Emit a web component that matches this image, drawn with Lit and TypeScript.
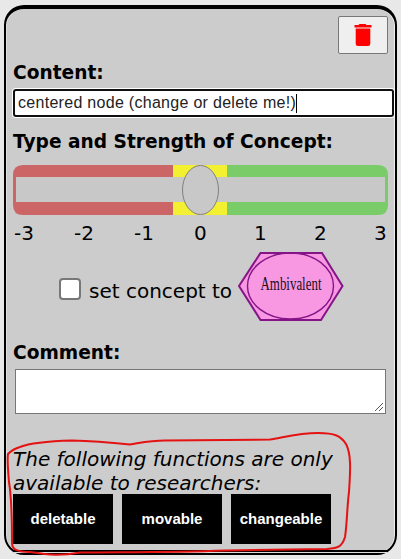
import { LitElement, html, css } from "lit";
import { customElement } from "lit/decorators.js";

@customElement("app-root")
export class AppRoot extends LitElement {
  static styles = css`
    :host { display: block; position: relative; width: 401px; height: 559px; overflow: hidden;
      background: #e8e8e8; font-family: "DejaVu Sans", Verdana, sans-serif; font-size: 20px; color: #000; }
    * { box-sizing: border-box; }
    .page { height: 559px; padding: 5px 4px 4px; }
    .card { height: 550px; border: 2px solid #000; border-top-width: 4px; border-radius: 20px;
      background: #ccc; padding: 7px 0 0 7px; display: flex; flex-direction: column; align-items: flex-start;
      box-shadow: inset -1px 0 #eee, inset 1px 0 #ddd; position: relative; }
    .foot { position: absolute; left: 8px; right: 8px; bottom: 0; height: 3px; background: #000; border-bottom: 1px solid #ddd; }
    .trash { margin-left: 325px; width: 50px; height: 38px; border: 1px solid #777; border-radius: 2px;
      background: #efefef; display: flex; align-items: center; justify-content: center; padding: 0; }
    .label { font-size: 18.6px; font-weight: 700; line-height: 24px; height: 24px; white-space: nowrap; }
    .content { margin-top: 7px; }
    .field { width: 381px; height: 28px; margin-top: 4px; border: 2px solid #101010; border-radius: 3px;
      box-shadow: 0 0 0 1px #fff; background: #fff; font: 16px/24px "Liberation Sans", Arial, sans-serif;
      letter-spacing: 0.29px; padding-left: 3px; color: #222; display: flex; align-items: center; white-space: nowrap; }
    .caret { width: 1px; height: 19px; background: #000; }
    .type { margin-top: 13px; }
    .slider { display: block; margin-top: 11px; }
    .scale { display: grid; grid-template-columns: repeat(7, 60px); margin: 6px 0 0 1px; line-height: 24px; width: 380px; }
    .scale span { white-space: nowrap; }
    .ambi { display: flex; align-items: center; margin: 6px 0 0 46px; height: 71px; }
    .check { width: 22px; height: 22px; border: 2px solid #777; border-radius: 4px; background: #fff; margin: 5px 8px 0 0; }
    .set { margin-top: 9px; line-height: 24px; white-space: nowrap; width: 148px; }
    .comment { margin-top: 19px; }
    .area { width: 371px; height: 45px; margin: 4px 0 0 2px; border: 1px solid #777; background: #fff;
      display: flex; align-items: flex-end; justify-content: flex-end; padding: 1px; }
    .note { font-style: italic; line-height: 24px; margin-top: 33px; white-space: nowrap; }
    .buttons { display: flex; gap: 9px; margin-top: -1px; }
    .fn { width: 100px; height: 50px; border: 0; background: #000; color: #fff; padding: 0 0 1px;
      font: bold 15px "Liberation Sans", Arial, sans-serif; }
    .mark { position: absolute; left: 0; top: 0; pointer-events: none; }
  `;

  render() {
    return html`
      <div class="page">
        <div class="card">
          <div class="foot"></div>
          <button class="trash" aria-label="Delete">
            <svg width="18" height="22" viewBox="0 0 18 22">
              <path d="M5.500 0h6l1 1h5v2.500H.5V1h4zM1.700 4.500h14.600v15.300q0 2.200-2.200 2.200h-10.200q-2.200 0-2.200-2.200z" fill="#f00" />
            </svg>
          </button>
          <div class="label content">Content:</div>
          <div class="field"><span class="value">centered node (change or delete me!)</span><span class="caret"></span></div>
          <div class="label type">Type and Strength of Concept:</div>
          <svg class="slider" width="375" height="50" viewBox="0 0 375 50">
            <path d="M10 0H160V50H10Q0 50 0 40V10Q0 0 10 0z" fill="#cc6666" />
            <path d="M160 0h54v50h-54z" fill="#f3ef31" />
            <path d="M214 0H365Q375 0 375 10V40Q375 50 365 50H214z" fill="#7acc68" />
            <path d="M3 12h369v25H3z" fill="#c8c8c8" />
            <ellipse cx="187.5" cy="25" rx="18" ry="24.5" fill="#c8c8c8" stroke="#808080" />
          </svg>
          <div class="scale">${[-3, -2, -1, 0, 1, 2, 3].map((n) => html`<span class="tick">${n}</span>`)}</div>
          <div class="ambi">
            <span class="check"></span><span class="set">set concept to</span>
            <svg width="107" height="71" viewBox="0 0 107 71">
              <path d="M2 35 23.500 2H85L105.500 35 84 69H23.500z" fill="#f898e3" stroke="#851487" stroke-width="2" />
              <ellipse cx="53.500" cy="35" rx="43" ry="33" fill="none" stroke="#851487" stroke-width="1.4" />
              <text x="23.500" y="39" textLength="61" lengthAdjust="spacingAndGlyphs" font-family="Liberation Serif, serif" font-size="18" fill="#201020">Ambivalent</text>
            </svg>
          </div>
          <div class="label comment">Comment:</div>
          <div class="area">
            <svg width="10" height="10" viewBox="0 0 10 10"><path d="M1 9 9 1M5 9 9 5" stroke="#555" fill="none" stroke-width="1" /></svg>
          </div>
          <div class="note">The following functions are only<br />available to researchers:</div>
          <div class="buttons">${["deletable", "movable", "changeable"].map((t) => html`<button class="fn">${t}</button>`)}</div>
        </div>
      </div>
      <svg class="mark" width="401" height="559" viewBox="0 0 401 559">
        <path d="M20 447C30 443 55 441 72 440.5C90 441 115 443 130 444.500C140 443 150 440.500 165 440.500L270 439.500C285 437 300 433 318 433C335 433 341 436 346 444C352 455 350 475 349 492C347 507 347 525 345 537C342 547 338 548 327 549L225 550.500C170 552.500 130 552 80 552.500C60 556 50 555 30 552C18 552 12 550 12 543C12 520 12 500 9 482C8 470 7 460 8 454Q13 449 20 447" fill="none" stroke="#e41212" stroke-width="2" />
      </svg>
    `;
  }
}
